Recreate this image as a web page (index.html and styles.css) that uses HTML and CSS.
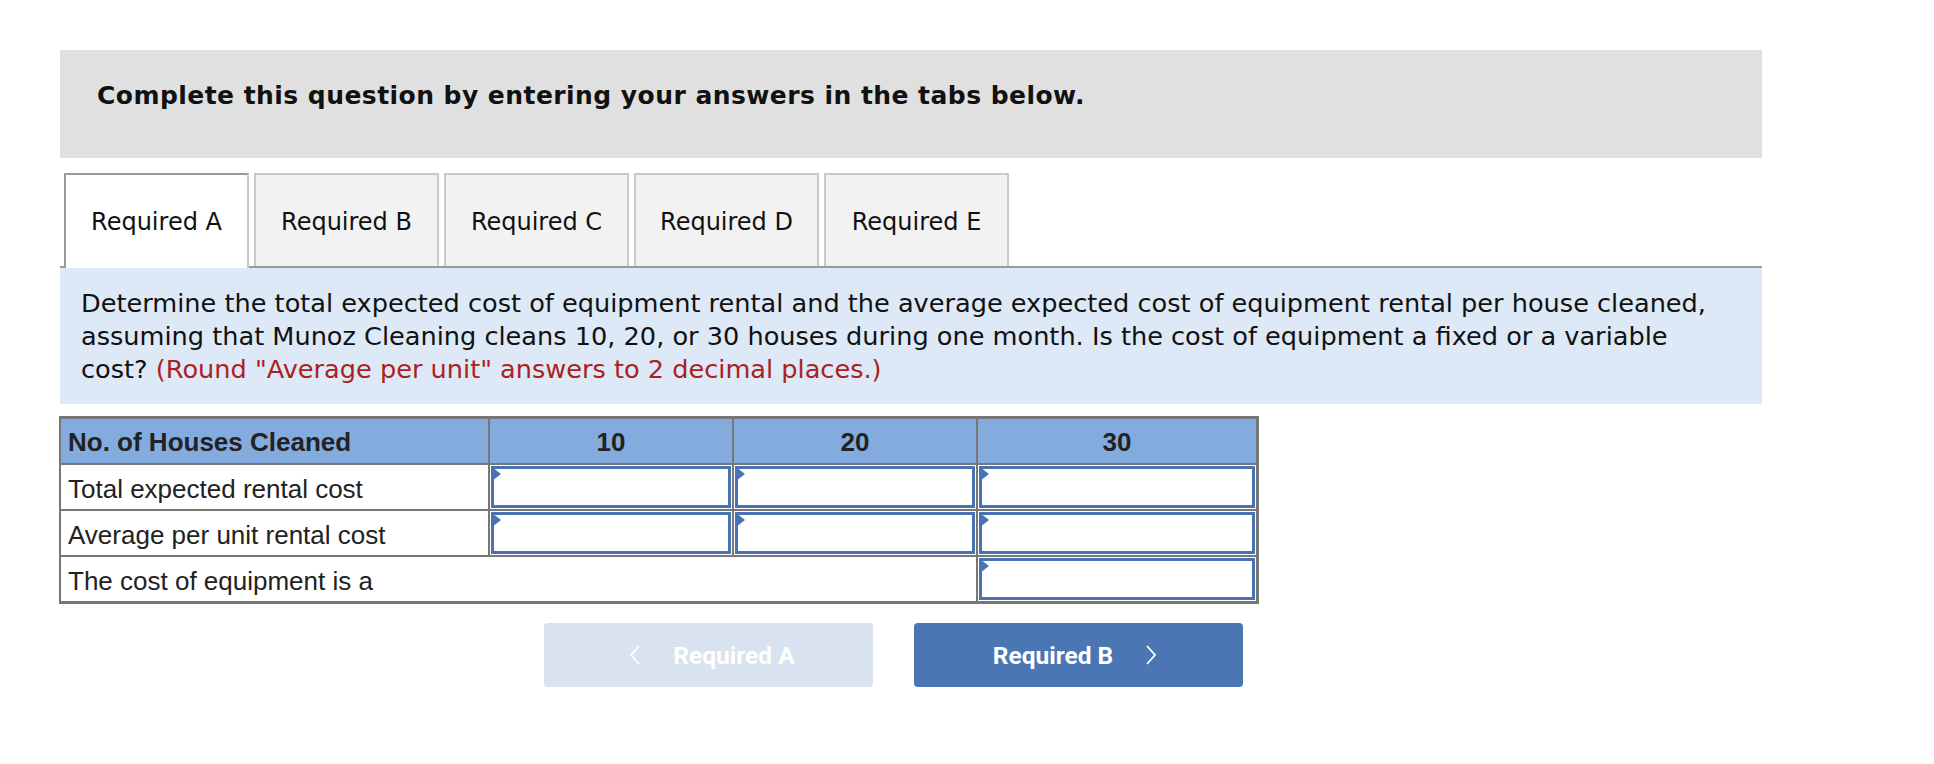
FILE: index.html
```html
<!DOCTYPE html>
<html lang="en">
<head>
<meta charset="utf-8">
<title>Required A</title>
<link rel="stylesheet" href="styles.css">
</head>
<body>
<div class="page">
  <div class="intro">Complete this question by entering your answers in the tabs below.</div>

  <div class="tabs">
    <div class="tab active">Required A</div>
    <div class="tab">Required B</div>
    <div class="tab">Required C</div>
    <div class="tab">Required D</div>
    <div class="tab">Required E</div>
  </div>

  <div class="question">Determine the total expected cost of equipment rental and the average expected cost of equipment rental per house cleaned, assuming that Munoz Cleaning cleans 10, 20, or 30 houses during one month. Is the cost of equipment a fixed or a variable cost? <span class="note">(Round "Average per unit" answers to 2 decimal places.)</span></div>

  <div class="grid">
    <div class="cell head label">No. of Houses Cleaned</div>
    <div class="cell head num">10</div>
    <div class="cell head num">20</div>
    <div class="cell head num">30</div>

    <div class="cell label">Total expected rental cost</div>
    <div class="cell field"><div class="inp"></div></div>
    <div class="cell field"><div class="inp"></div></div>
    <div class="cell field"><div class="inp"></div></div>

    <div class="cell label">Average per unit rental cost</div>
    <div class="cell field"><div class="inp"></div></div>
    <div class="cell field"><div class="inp"></div></div>
    <div class="cell field"><div class="inp"></div></div>

    <div class="cell label span3">The cost of equipment is a</div>
    <div class="cell field"><div class="inp"></div></div>
  </div>

  <div class="nav">
    <button class="btn prev" type="button">
      <svg class="chev" width="12" height="22" viewBox="0 0 12 22"><path d="M10 2 L2 11 L10 20" fill="none" stroke="#fff" stroke-width="1.8"/></svg>
      <span>Required A</span>
    </button>
    <button class="btn next" type="button">
      <span>Required B</span>
      <svg class="chev" width="12" height="22" viewBox="0 0 12 22"><path d="M2 2 L10 11 L2 20" fill="none" stroke="#fff" stroke-width="1.8"/></svg>
    </button>
  </div>
</div>
</body>
</html>
```

FILE: styles.css
```css
html, body {
  margin: 0;
  padding: 0;
  background: #ffffff;
}

.page {
  padding: 50px 0 0 60px;
  width: 1702px;
}

.intro {
  background: #e0e0e0;
  height: 108px;
  box-sizing: border-box;
  padding: 31px 37px 0;
  font-family: "DejaVu Sans", Verdana, sans-serif;
  font-weight: bold;
  font-size: 25px;
  letter-spacing: 0.45px;
  line-height: 30px;
  color: #111;
}

.tabs {
  margin-top: 15px;
  display: flex;
  gap: 5px;
  padding-left: 4px;
  height: 93px;
  border-bottom: 2px solid #9a9a9a;
}

.tab {
  width: 185px;
  box-sizing: border-box;
  border: 2px solid #c9c9c9;
  border-bottom: none;
  background: #f2f2f2;
  display: flex;
  align-items: center;
  justify-content: center;
  font-family: "DejaVu Sans", Verdana, sans-serif;
  font-size: 24px;
  color: #111;
  padding-top: 3px;
}

.tab.active {
  background: #ffffff;
  border-left-color: #9a9a9a;
  border-top-color: #9a9a9a;
  height: 95px;
  padding-top: 1px;
}

.question {
  background: #dde9f7;
  padding: 19px 21px 18px;
  font-family: "DejaVu Sans", Tahoma, sans-serif;
  font-size: 25.6px;
  line-height: 33px;
  color: #111;
}

.note {
  color: #ab211c;
}

.grid {
  margin-top: 12px;
  width: 1200px;
  margin-left: -1px;
  box-sizing: border-box;
  display: grid;
  grid-template-columns: 427px 242px 242px 1fr;
  grid-auto-rows: 44px;
  gap: 2px;
  background: #777777;
  border: 3px solid #777777;
  border-left-width: 2px;
}

.cell {
  background: #ffffff;
  font-family: "Liberation Sans", Arial, sans-serif;
  font-size: 26px;
  color: #222;
  display: flex;
  align-items: center;
}

.cell.head {
  background: #84abde;
  font-weight: bold;
  padding-top: 2px;
}

.cell.label {
  padding-left: 7px;
}

.cell.label:not(.head) {
  padding-top: 5px;
}

.cell.num {
  justify-content: center;
}

.cell.span3 {
  grid-column: span 3;
}

.cell.field {
  padding: 1px;
  align-items: stretch;
}

.inp {
  flex: 1;
  box-sizing: border-box;
  border: 3px solid #4a73b3;
  position: relative;
  background: #fff;
}

.inp::before {
  content: "";
  position: absolute;
  left: -2px;
  top: -2px;
  border-left: 9px solid #4a73b3;
  border-top: 7px solid transparent;
  border-bottom: 7px solid transparent;
}

.nav {
  margin-top: 19px;
  display: flex;
  gap: 41px;
  padding-left: 484px;
}

.btn {
  width: 329px;
  height: 64px;
  border: none;
  border-radius: 4px;
  display: flex;
  align-items: center;
  justify-content: center;
  gap: 32px;
  font-family: Roboto, "Liberation Sans", sans-serif;
  font-weight: 700;
  font-size: 24.5px;
  color: #ffffff;
  padding: 0;
}

.btn.prev {
  background: #d9e3ef;
  padding-left: 7px;
}

.btn.next {
  background: #4a76b4;
  padding-right: 7px;
}

.chev {
  display: block;
}
```
